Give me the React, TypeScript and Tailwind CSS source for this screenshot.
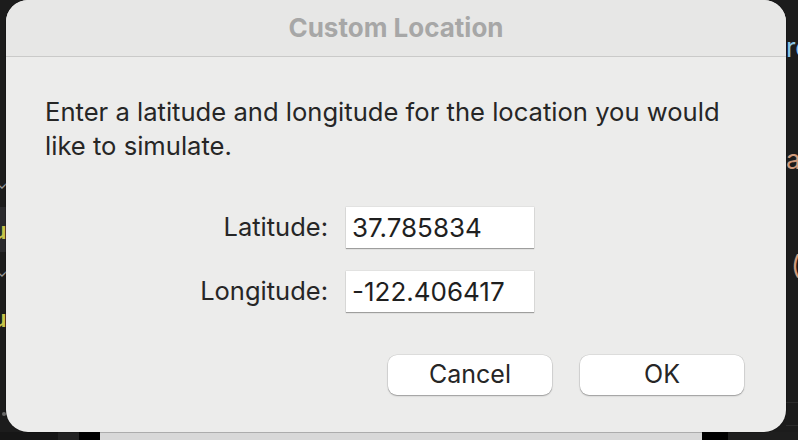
import React from 'react';

const font = { fontFamily: 'Inter, "Noto Sans", sans-serif' };

function EditorBackdrop(): React.ReactElement {
  return (
    <>
      {/* left gutter bits peeking out */}
      <div className="absolute left-0 top-[207px] h-[45px] w-[8px] bg-[#2a2a2d]" />
      <span className="absolute left-[-3px] top-[174px] text-[14px] text-[#9a9a9a]">✓</span>
      <span className="absolute left-[-3px] top-[262px] text-[14px] text-[#9a9a9a]">✓</span>
      <span className="absolute left-[-8px] top-[213px] text-[24px] font-semibold text-[#c9c34a]">u</span>
      <span className="absolute left-[-8px] top-[301px] text-[24px] font-semibold text-[#c9c34a]">u</span>
      <div className="absolute left-[2px] top-[412px] h-[4px] w-[4px] rounded-full bg-[#6a6a6a]" />

      {/* right side code fragments */}
      <span className="absolute left-[786px] top-[28px] text-[26px] text-[#8cc3e6]">re</span>
      <span className="absolute left-[786px] top-[140px] text-[26px] text-[#cf9a7c]">ac</span>
      <span className="absolute left-[791px] top-[245px] text-[26px] text-[#cf9a7c]">(</span>
      <div className="absolute left-[786px] top-[402px] h-px w-[12px] bg-[#2c2c2c]" />
      <div className="absolute left-[786px] top-[425px] h-px w-[12px] bg-[#2c2c2c]" />
    </>
  );
}

function Field({ label, value }: { label: string; value: string }): React.ReactElement {
  return (
    <div className="flex items-center">
      <label className="w-[340px] pr-[18px] text-right text-[25.5px] text-[#262626]">{label}</label>
      <div className="flex h-[41px] w-[188px] items-center bg-white px-[6px] text-[26px] text-[#1f1f1f] shadow-[0_0_0_0.5px_rgba(0,0,0,0.08),0_1px_1px_rgba(0,0,0,0.3)]">
        {value}
      </div>
    </div>
  );
}

export default function App(): React.ReactElement {
  return (
    <div className="relative h-[440px] w-[798px] overflow-hidden bg-[#1c1c1c]" style={font}>
      <EditorBackdrop />

      {/* strip under the dialog */}
      <div className="absolute bottom-0 left-0 flex h-[8px] w-full">
        <div className="w-[58px] bg-[#161616]" />
        <div className="w-[21px] bg-[#222222]" />
        <div className="w-[21px] bg-black" />
        <div className="w-[602px] bg-[#d8d8d8]" />
        <div className="w-[26px] bg-black" />
        <div className="flex-1 bg-[#1e1e1e]" />
      </div>

      {/* Dialog */}
      <div className="absolute left-[6px] top-0 flex h-[432px] w-[780px] flex-col overflow-hidden rounded-[22px] bg-[#ececeb] shadow-[0_0_0_0.5px_rgba(0,0,0,0.4)]">
        <div className="flex h-[57px] shrink-0 items-center justify-center border-b border-[#cacac9] bg-[#e7e7e6]">
          <h1 className="text-[26px] font-bold leading-none text-[#a7a7a7]">Custom Location</h1>
        </div>

        <div className="flex flex-1 flex-col">
          <p className="px-[39px] pt-[38px] text-[25.6px] leading-[34px] text-[#262626]">
            Enter a latitude and longitude for the location you would like to simulate.
          </p>

          <div className="mt-[44px] flex flex-col gap-[23px]">
            <Field label="Latitude:" value="37.785834" />
            <Field label="Longitude:" value="-122.406417" />
          </div>

          <div className="mt-[43px] flex justify-end gap-[28px] pr-[42px]">
            <button className="h-[40px] w-[164px] rounded-[9px] bg-white text-[25px] text-[#262626] shadow-[0_0_0_0.5px_rgba(0,0,0,0.12),0_1px_1.5px_rgba(0,0,0,0.3)]">
              Cancel
            </button>
            <button className="h-[40px] w-[164px] rounded-[9px] bg-white text-[25px] text-[#262626] shadow-[0_0_0_0.5px_rgba(0,0,0,0.12),0_1px_1.5px_rgba(0,0,0,0.3)]">
              OK
            </button>
          </div>
        </div>
      </div>
    </div>
  );
}
